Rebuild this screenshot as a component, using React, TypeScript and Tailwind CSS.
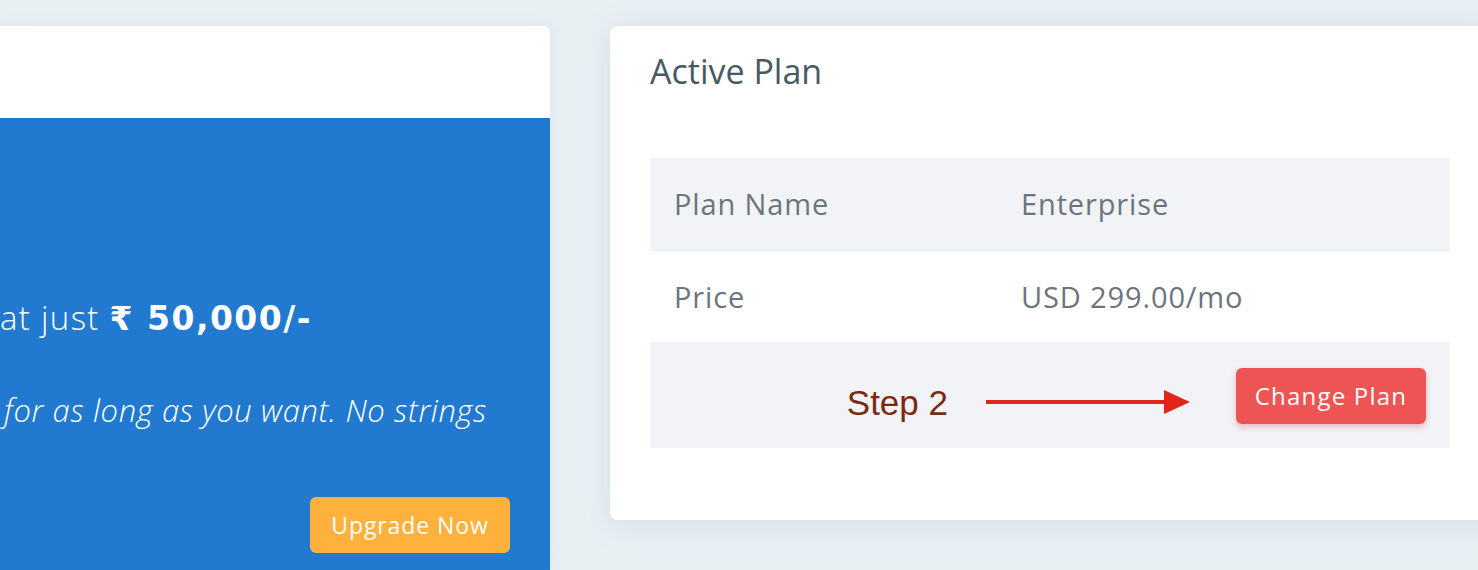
import React from 'react';

export default function App() {
  return (
    <div className="w-[1478px] h-[570px] overflow-hidden bg-[#e9f0f4] flex gap-[60px] pt-[26px] font-['Open_Sans','Noto_Sans',sans-serif]">
      {/* Upgrade card (extends past the left edge) */}
      <div className="w-[550px] shrink-0 flex flex-col rounded-tr-md overflow-hidden shadow-[0_0_20px_rgba(150,170,190,0.15)]">
        <div className="h-[92px] bg-white" />
        <div className="flex-1 bg-[#2179d0] text-white pr-[40px]">
          <p className="mt-[180px] text-[33px] leading-[40px] font-light tracking-[0.04em] whitespace-nowrap">
            at just{' '}
            <span className="font-['DejaVu_Sans',sans-serif] font-bold text-[33px] tracking-[0.045em]">₹ 50,000/-</span>
          </p>
          <p className="mt-[51px] ml-[4px] text-[31px] leading-[40px] italic font-light tracking-[0.02em] whitespace-nowrap">
            for as long as you want. No strings
          </p>
          <div className="flex justify-end mt-[67px]">
            <button className="h-[56px] w-[200px] rounded-md bg-[#ffb13d] text-white text-[23px] tracking-[0.04em] leading-none">
              Upgrade Now
            </button>
          </div>
        </div>
      </div>

      {/* Active plan card */}
      <div className="w-[890px] shrink-0 h-[494px] bg-white rounded-lg shadow-[0_4px_30px_rgba(120,140,160,0.18)] pt-[28px] px-[40px]">
        <h4 className="text-[34px] leading-none text-[#455a64]">Active Plan</h4>
        <div className="w-[800px] mt-[70px] text-[29px] tracking-[0.03em] text-[#6c757d]">
          <div className="flex items-center h-[93px] bg-[#f2f3f7] border-b border-[#eaedf1]">
            <div className="w-[371px] pl-[24px]">Plan Name</div>
            <div>Enterprise</div>
          </div>
          <div className="flex items-center h-[91px] bg-white">
            <div className="w-[371px] pl-[24px]">Price</div>
            <div>USD 299.00/mo</div>
          </div>
          <div className="flex items-center justify-end h-[106px] bg-[#f2f3f7] pr-[24px] tracking-normal">
            <span className="mt-[14px] ml-[2px] text-[35px] text-[#7b2a0f] font-['Liberation_Sans',Arial,sans-serif] leading-none">
              Step 2
            </span>
            <svg className="mt-[14px] ml-[38px]" width="204" height="24" viewBox="0 0 204 24">
              <rect x="0" y="10" width="180" height="4" fill="#e0261b" />
              <polygon points="178,0 204,12 178,24" fill="#e0261b" />
            </svg>
            <button className="ml-[46px] mt-[2px] h-[56px] w-[190px] rounded-md bg-[#ee5454] text-white text-[24px] tracking-[0.05em] leading-none shadow-[0_3px_6px_rgba(200,60,60,0.3)]">
              Change Plan
            </button>
          </div>
        </div>
      </div>
    </div>
  );
}
